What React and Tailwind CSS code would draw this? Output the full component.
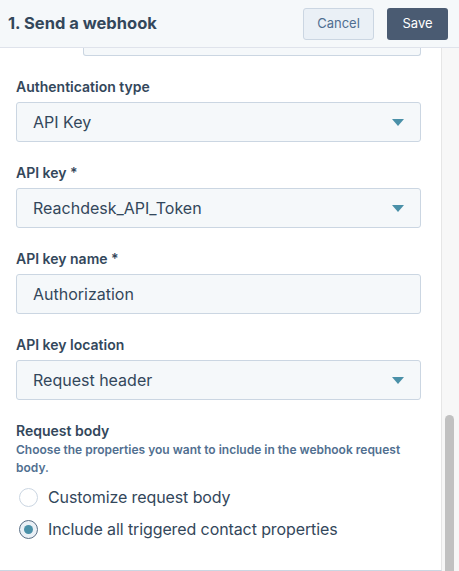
import React, { useState } from "react";

const fields = [
  { label: "Authentication type", value: "API Key", select: true },
  { label: "API key *", value: "Reachdesk_API_Token", select: true },
  { label: "API key name *", value: "Authorization", select: false },
  { label: "API key location", value: "Request header", select: true },
];

function Caret() {
  return (
    <svg width="12" height="7" viewBox="0 0 12 7" className="shrink-0">
      <path d="M0 0h12L6 7z" fill="#4a90a8" />
    </svg>
  );
}

function Field({ label, value, select }) {
  return (
    <div className="mt-[21px]">
      <div className="text-[14px] leading-[20px] font-semibold text-[#33475b]">{label}</div>
      <div className="mt-[5px] h-[40px] flex items-center justify-between rounded-[3px] border border-[#cbd6e2] bg-[#f5f8fa] pl-4 pr-4">
        <span className="text-[16px] text-[#33475b]">{value}</span>
        {select && <Caret />}
      </div>
    </div>
  );
}

function Radio({ checked, label, onClick }) {
  return (
    <label onClick={onClick} className="flex items-center h-[32px] cursor-pointer">
      {checked ? (
        <span className="ml-[3px] w-[19px] h-[19px] rounded-full border-[1.5px] border-[#5a6f86] bg-[#eaf0f6] flex items-center justify-center">
          <span className="w-[9px] h-[9px] rounded-full bg-[#4a90a8]" />
        </span>
      ) : (
        <span className="ml-[3px] w-[19px] h-[19px] rounded-full border border-[#cbd6e2] bg-white" />
      )}
      <span className="ml-[10px] text-[16px] tracking-[-0.1px] text-[#33475b]">{label}</span>
    </label>
  );
}

export default function App() {
  const [body, setBody] = useState("all");

  return (
    <div
      className="w-[459px] h-[571px] flex flex-col bg-white overflow-hidden"
      style={{ fontFamily: "Inter, 'Noto Sans', sans-serif" }}
    >
      <div className="h-[48px] shrink-0 flex items-center justify-between bg-[#f5f8fa] border-b border-[#dfe3eb] pl-2 pr-[11px]">
        <h1 className="text-[16.5px] font-bold text-[#33475b]">1. Send a webhook</h1>
        <div className="flex items-center gap-[13px]">
          <button className="h-[32px] w-[71px] rounded-[3px] border border-[#cbd6e2] bg-[#eaf0f6] text-[13px] text-[#506e91]">
            Cancel
          </button>
          <button className="h-[32px] w-[61px] rounded-[3px] bg-[#4a5b72] text-[13px] text-white">
            Save
          </button>
        </div>
      </div>

      <div className="flex flex-1 min-h-0">
        <div className="flex-1 border-r border-[#e6e6e6] border-b border-b-[#cbd6e2] pl-4 pr-[20px]">
          <div className="ml-[67px] h-[8px] rounded-b-[3px] border border-t-0 border-[#cbd6e2] bg-[#f5f8fa]" />
          {fields.map((f) => (
            <Field key={f.label} {...f} />
          ))}
          <div className="mt-[21px]">
            <div className="text-[14px] leading-[20px] font-semibold text-[#33475b]">Request body</div>
            <p className="text-[12px] leading-[18px] font-semibold text-[#516f90] pr-1">
              Choose the properties you want to include in the webhook request body.
            </p>
            <div className="mt-[4px]">
              <Radio checked={body === "custom"} label="Customize request body" onClick={() => setBody("custom")} />
              <Radio checked={body === "all"} label="Include all triggered contact properties" onClick={() => setBody("all")} />
            </div>
          </div>
        </div>
        <div className="w-[17px] shrink-0 bg-[#f7f7f7] flex flex-col">
          <div className="flex-1" />
          <div className="h-[156px] mx-[3px] w-[9px] rounded-t-full bg-[#c1c1c1]" />
        </div>
      </div>
    </div>
  );
}
